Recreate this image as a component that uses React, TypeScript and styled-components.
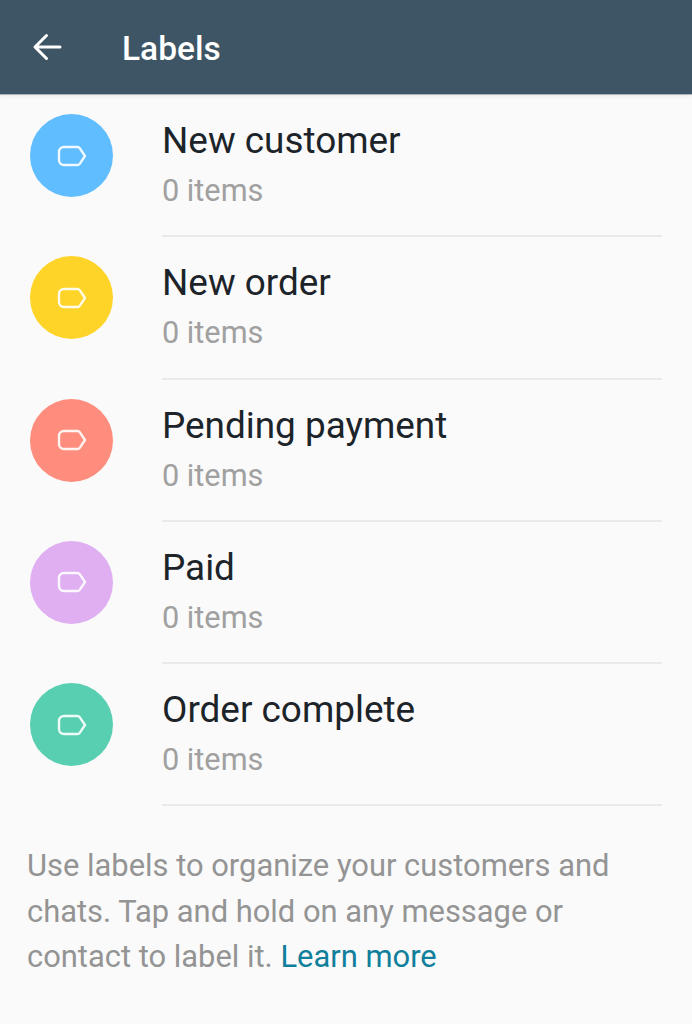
import React from "react";
import styled, { createGlobalStyle } from "styled-components";

const GlobalStyle = createGlobalStyle`
  html, body {
    margin: 0;
    padding: 0;
    background: #fafafa;
  }
  body {
    font-family: Roboto, "Liberation Sans", sans-serif;
  }
`;

const Page = styled.div`
  width: 692px;
  height: 1024px;
  overflow: hidden;
  background: #fafafa;
`;

const TopBar = styled.header`
  height: 94px;
  background: #3d5564;
  border-bottom: 1px solid #a9b4bb;
  box-shadow: 0 2px 4px rgba(0, 0, 0, 0.06);
  display: flex;
  align-items: center;
  padding-left: 32px;
  gap: 60px;
  box-sizing: content-box;
`;

const BackIcon = styled.svg`
  width: 30px;
  height: 28px;
  display: block;
  flex: none;
`;

const BarTitle = styled.h1`
  margin: 4px 0 0;
  color: #ffffff;
  font-size: 33.5px;
  font-weight: 500;
  line-height: 1;
`;

const LabelList = styled.ul`
  list-style: none;
  margin: 0;
  padding: 0 30px 0 30px;
`;

const LabelRow = styled.li`
  height: 142.25px;
  display: flex;
  align-items: flex-start;
  gap: 49px;
`;

const Badge = styled.div<{ $color: string }>`
  width: 83px;
  height: 83px;
  margin-top: 19px;
  flex: none;
  border-radius: 50%;
  background: ${(p) => p.$color};
  display: flex;
  align-items: center;
  justify-content: center;
`;

const TagIcon = styled.svg`
  width: 30px;
  height: 22px;
  display: block;
`;

const RowBody = styled.div`
  flex: 1;
  height: 142.25px;
  box-sizing: border-box;
  border-bottom: 2px solid #e9e9e9;
  padding-top: 25px;
`;

const RowTitle = styled.div`
  color: #1c242a;
  font-size: 36.9px;
  line-height: 41px;
`;

const RowCount = styled.div`
  color: #a0a0a0;
  font-size: 30.7px;
  line-height: 35px;
  margin-top: 12px;
`;

const Hint = styled.p`
  margin: 37px 0 0;
  padding: 0 27px;
  color: #949494;
  font-size: 30.9px;
  line-height: 45.5px;
`;

const LearnMore = styled.a`
  color: #0f7f9c;
`;

const labels = [
  { name: "New customer", color: "#60bdff" },
  { name: "New order", color: "#ffd428" },
  { name: "Pending payment", color: "#ff8d7e" },
  { name: "Paid", color: "#dfaff2" },
  { name: "Order complete", color: "#59cfb1" },
];

const App = () => {
  return (
    <Page>
      <GlobalStyle />
      <TopBar>
        <BackIcon viewBox="0 0 30 28" fill="none">
          <path
            d="M28 14H4M14.5 2.5L3 14l11.5 11.5"
            stroke="#ffffff"
            strokeWidth="3"
            strokeLinecap="round"
            strokeLinejoin="round"
          />
        </BackIcon>
        <BarTitle>Labels</BarTitle>
      </TopBar>
      <LabelList>
        {labels.map((label) => (
          <LabelRow key={label.name}>
            <Badge $color={label.color}>
              <TagIcon viewBox="0 0 30 22" fill="none">
                <path
                  d="M7 2h13.500c.9 0 1.700.4 2.200 1.100L28 11l-5.300 7.900c-.5.7-1.300 1.100-2.200 1.100H7c-2.800 0-5-2.200-5-5V7c0-2.800 2.200-5 5-5z"
                  stroke="#ffffff"
                  strokeOpacity="0.9"
                  strokeWidth="2.400"
                  strokeLinejoin="round"
                />
              </TagIcon>
            </Badge>
            <RowBody>
              <RowTitle>{label.name}</RowTitle>
              <RowCount>0 items</RowCount>
            </RowBody>
          </LabelRow>
        ))}
      </LabelList>
      <Hint>
        Use labels to organize your customers and chats. Tap and hold on any message or contact to
        label it. <LearnMore>Learn more</LearnMore>
      </Hint>
    </Page>
  );
};

export default App;
